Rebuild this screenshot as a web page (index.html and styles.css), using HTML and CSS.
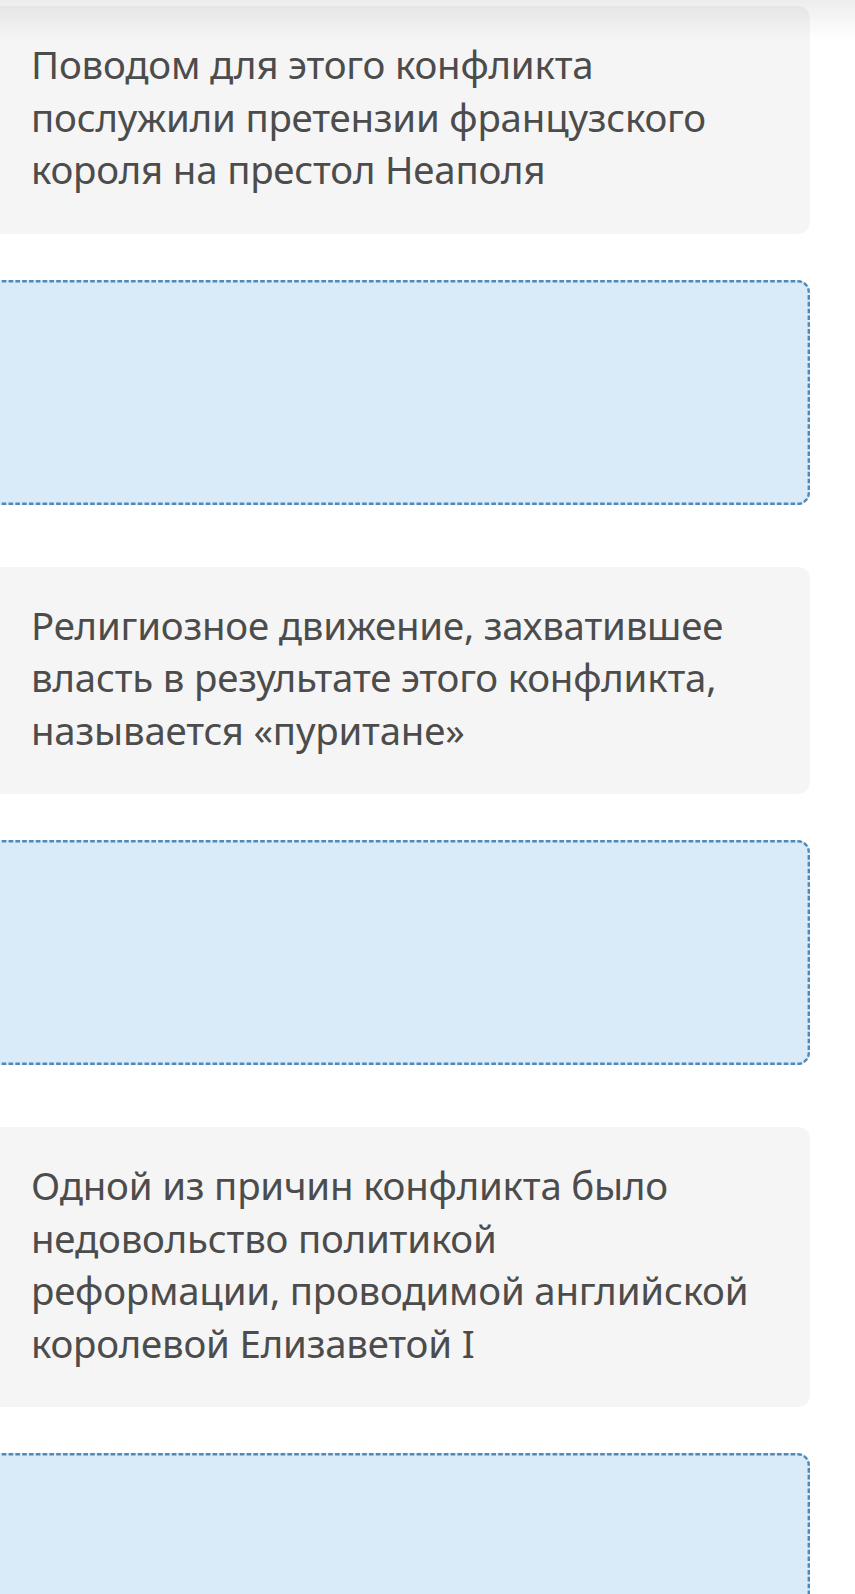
FILE: index.html
```html
<!DOCTYPE html>
<html lang="ru">
<head>
    <meta charset="UTF-8">
    <meta name="viewport" content="width=device-width, initial-scale=1.0">
    <title>Сопоставление утверждений</title>
    <link rel="stylesheet" href="styles.css">
</head>
<body>
    <!-- тень от закреплённой шапки -->
    <div class="header-shadow"></div>

    <main class="task">
        <!-- утверждение 1 -->
        <div class="pair">
            <div class="statement">Поводом для этого конфликта<br>послужили претензии французского<br>короля на престол Неаполя</div>
            <div class="drop-zone">
                <svg class="dash-frame"><rect></rect></svg>
            </div>
        </div>

        <!-- утверждение 2 -->
        <div class="pair">
            <div class="statement">Религиозное движение, захватившее<br>власть в результате этого конфликта,<br>называется «пуритане»</div>
            <div class="drop-zone">
                <svg class="dash-frame"><rect></rect></svg>
            </div>
        </div>

        <!-- утверждение 3 -->
        <div class="pair">
            <div class="statement">Одной из причин конфликта было<br>недовольство политикой<br>реформации, проводимой английской<br>королевой Елизаветой I</div>
            <div class="drop-zone">
                <svg class="dash-frame"><rect></rect></svg>
            </div>
        </div>
    </main>
</body>
</html>
```

FILE: styles.css
```css
/* переменные */
:root {
    --card-bg: #f5f5f5;
    --card-text: #4c4c4c;
    --zone-bg: #d9eaf8;
    --zone-border: #5089b6;
    --radius: 12px;
    --font-family: "Noto Sans", "Open Sans", sans-serif;
}

* {
    margin: 0;
    padding: 0;
    box-sizing: border-box;
}

body {
    background: #fff;
    font-family: var(--font-family);
    color: var(--card-text);
    padding-top: 6px;
    overflow-x: hidden;
}

/* тень под шапкой */
.header-shadow {
    position: fixed;
    top: 0;
    left: 0;
    right: 0;
    height: 40px;
    background: linear-gradient(to bottom, rgba(0, 0, 0, 0.07), rgba(0, 0, 0, 0));
    pointer-events: none;
    z-index: 10;
}

.task {
    width: 834px;
    margin-left: -24px;
    display: flex;
    flex-direction: column;
    gap: 62px;
}

.pair {
    display: flex;
    flex-direction: column;
    gap: 46px;
}

/* карточка с утверждением */
.statement {
    background: var(--card-bg);
    border-radius: var(--radius);
    padding: 32px 30px 38px 55px;
    font-size: 38.4px;
    line-height: 52.5px;
    letter-spacing: -0.2px;
}

/* поле для перетаскивания */
.drop-zone {
    position: relative;
    height: 225px;
    background: var(--zone-bg);
    border-radius: var(--radius);
}

/* пунктирная рамка поверх поля: частый штрих */
.dash-frame {
    position: absolute;
    inset: 0;
    width: 100%;
    height: 100%;
    pointer-events: none;
}

.dash-frame rect {
    x: 1.2px;
    y: 1.2px;
    width: calc(100% - 2.4px);
    height: calc(100% - 2.4px);
    rx: 11px;
    fill: none;
    stroke: var(--zone-border);
    stroke-width: 2.4;
    stroke-dasharray: 4.6 2.2;
}
```
